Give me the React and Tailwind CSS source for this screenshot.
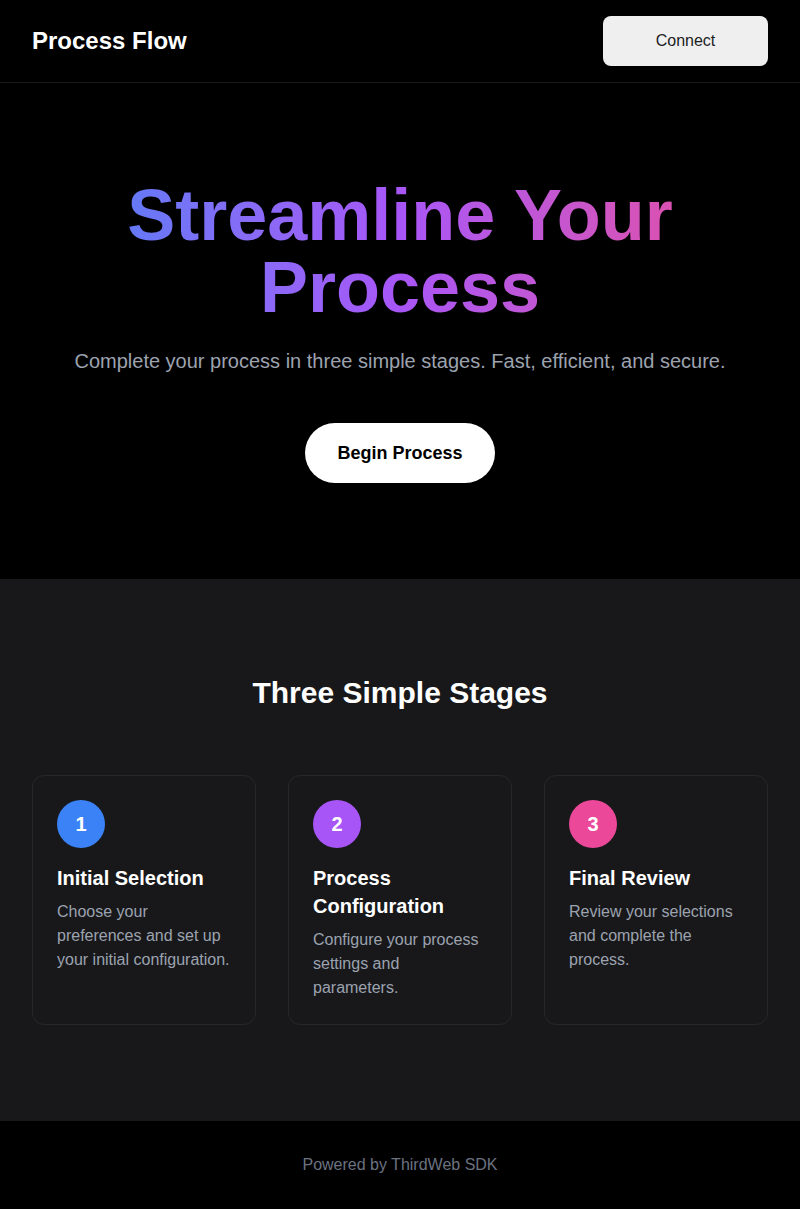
import React from 'react';

const stages = [
  {
    id: 1,
    title: 'Initial Selection',
    text: 'Choose your preferences and set up your initial configuration.',
    color: 'bg-[#3b82f6]',
  },
  {
    id: 2,
    title: 'Process Configuration',
    text: 'Configure your process settings and parameters.',
    color: 'bg-[#a855f7]',
  },
  {
    id: 3,
    title: 'Final Review',
    text: 'Review your selections and complete the process.',
    color: 'bg-[#ec4899]',
  },
];

function App() {
  return (
    <div className="min-h-screen bg-black text-white font-['Liberation_Sans',Arial,sans-serif]">
      {/* Header */}
      <header className="flex items-center justify-between px-8 py-4 border-b border-[#18181b]">
        <h1 className="text-2xl font-bold">Process Flow</h1>
        <button className="w-[165px] h-[50px] rounded-lg bg-[#efeff0] text-[#1c1c1e] text-base">
          Connect
        </button>
      </header>

      {/* Hero */}
      <section className="px-8 py-24 text-center">
        <h2 className="text-7xl font-bold leading-none mb-6 bg-gradient-to-r from-[#3b82f6] via-[#a855f7] to-[#ec4899] bg-clip-text text-transparent">
          Streamline Your
          <br />
          Process
        </h2>
        <p className="text-xl text-[#9ca3af] mb-12">
          Complete your process in three simple stages. Fast, efficient, and secure.
        </p>
        <button className="bg-white text-black font-bold text-lg px-8 py-4 rounded-full">
          Begin Process
        </button>
      </section>

      {/* Stages */}
      <section className="bg-[#18181b] px-8 py-24">
        <h2 className="text-3xl font-bold text-center mb-16">Three Simple Stages</h2>
        <div className="grid grid-cols-3 gap-8">
          {stages.map((stage) => (
            <div key={stage.id} className="rounded-xl border border-[#27272a] p-6">
              <div
                className={`${stage.color} w-12 h-12 rounded-full flex items-center justify-center text-xl font-bold mb-4`}
              >
                {stage.id}
              </div>
              <h3 className="text-xl font-bold mb-2">{stage.title}</h3>
              <p className="text-[#9ca3af]">{stage.text}</p>
            </div>
          ))}
        </div>
      </section>

      {/* Footer */}
      <footer className="py-8 text-center text-[#6b7280]">Powered by ThirdWeb SDK</footer>
    </div>
  );
}

export default App;
